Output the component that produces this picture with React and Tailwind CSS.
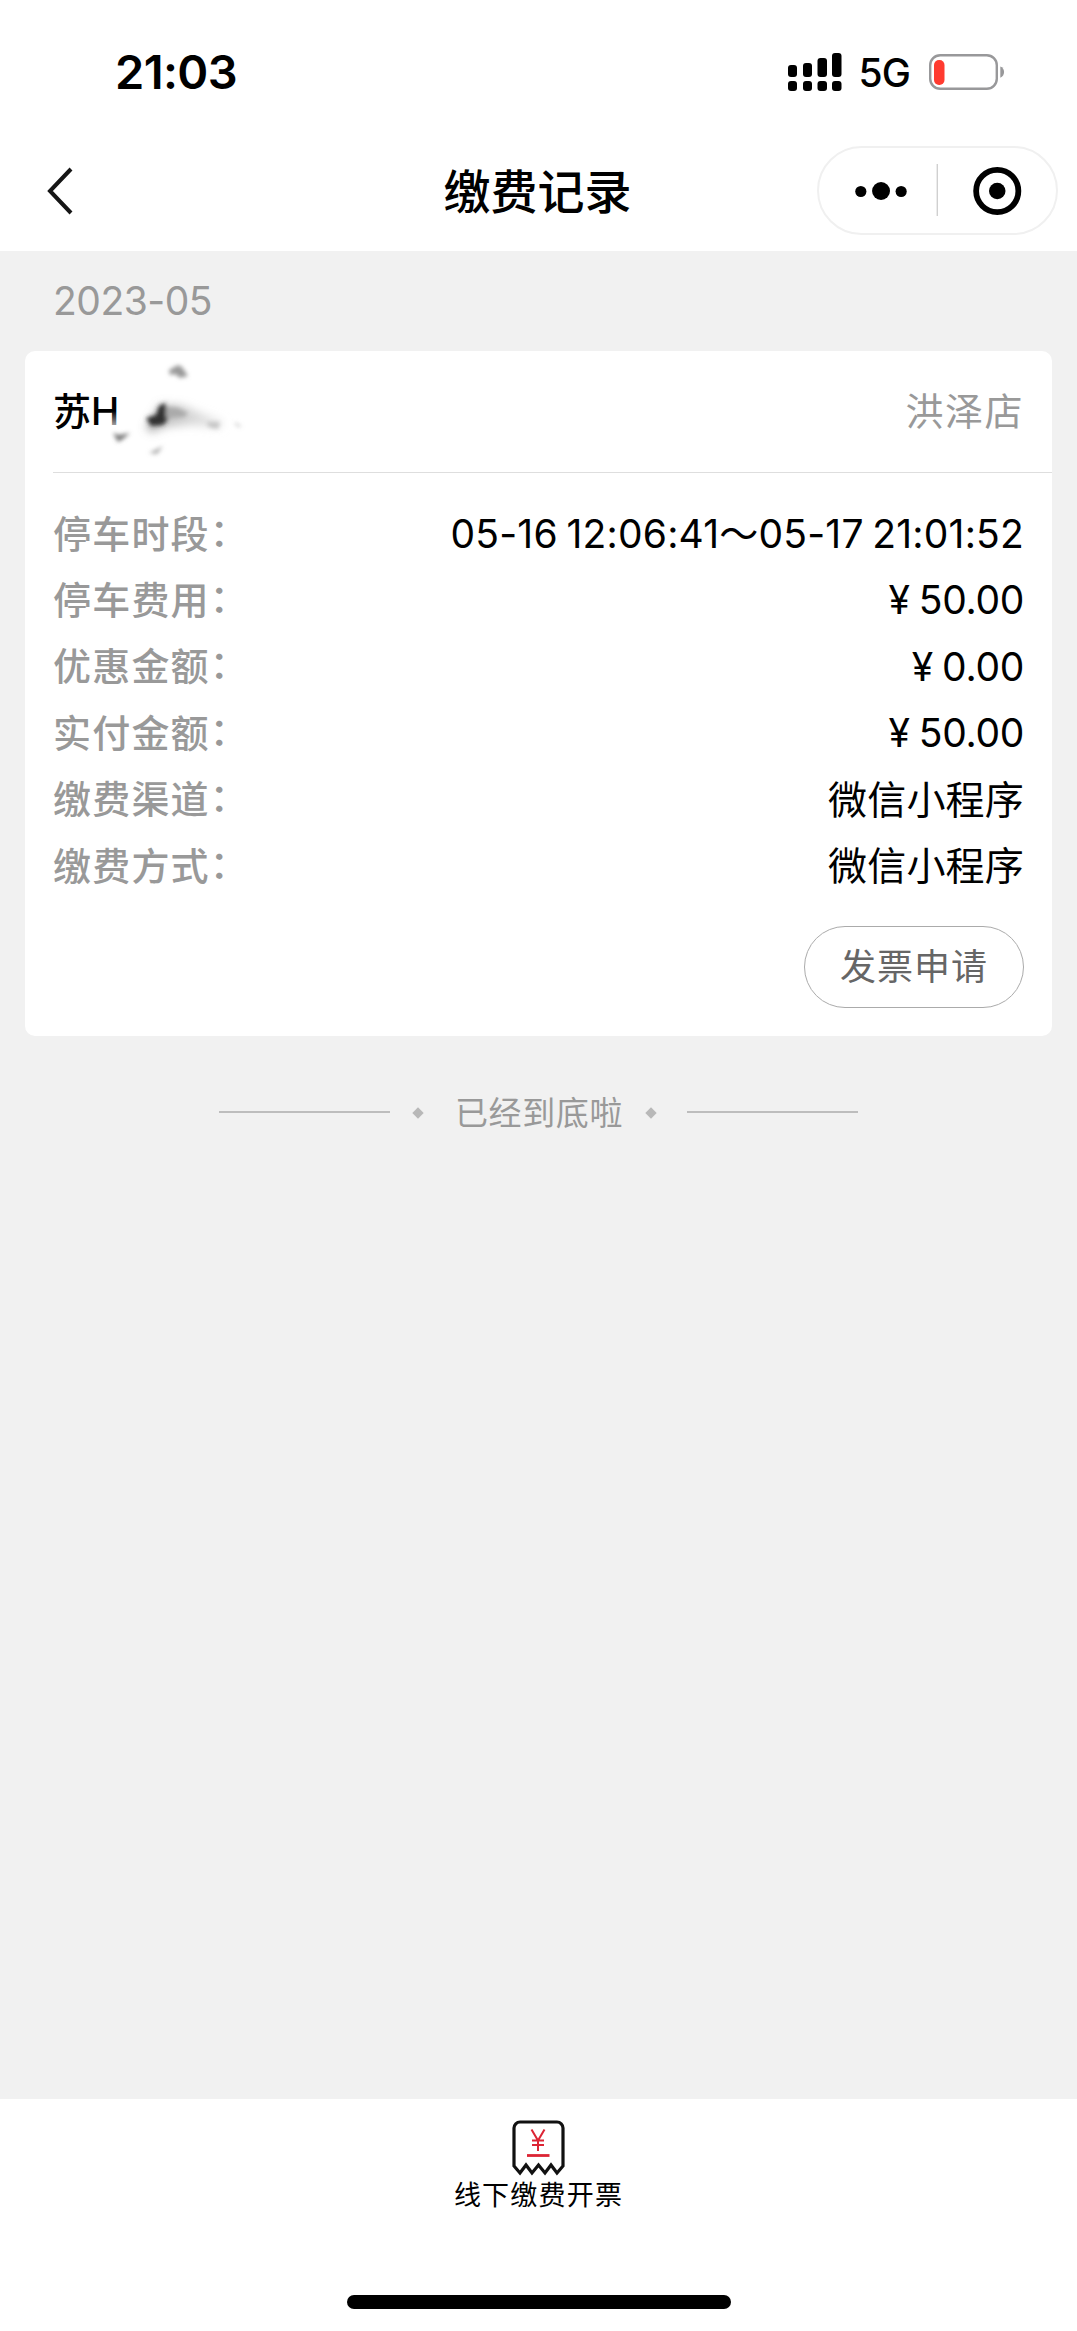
const rows = [
  { label: "停车时段", value: "05-16 12:06:41～05-17 21:01:52" },
  { label: "停车费用", value: "¥ 50.00", amount: true },
  { label: "优惠金额", value: "¥ 0.00", amount: true },
  { label: "实付金额", value: "¥ 50.00", amount: true },
  { label: "缴费渠道", value: "微信小程序" },
  { label: "缴费方式", value: "微信小程序" },
];

function SignalIcon() {
  return (
    <svg width="54" height="40" viewBox="0 0 54 40">
      <rect x="0" y="13" width="9" height="12" rx="3" />
      <rect x="15" y="11" width="9" height="14" rx="3" />
      <rect x="29.5" y="6" width="9.5" height="19" rx="3" />
      <rect x="44" y="1" width="9.5" height="24" rx="3" />
      <rect x="0" y="29" width="9" height="10" rx="3" />
      <rect x="15" y="29" width="9" height="10" rx="3" />
      <rect x="29.5" y="29" width="9.5" height="10" rx="3" />
      <rect x="44" y="29" width="9.5" height="10" rx="3" />
    </svg>
  );
}

function BatteryIcon() {
  return (
    <svg width="76" height="36" viewBox="0 0 76 36">
      <rect x="1.2" y="1.2" width="66.6" height="33.6" rx="10" fill="none" stroke="#98989a" strokeWidth="2.4" />
      <rect x="5" y="6" width="10.5" height="25" rx="5" fill="#ff3b30" />
      <path d="M71.3 12.5c5 1.6 5 9.6 0 11.2z" fill="#98989a" />
    </svg>
  );
}

function StatusBar() {
  return (
    <div className="flex h-[146px] items-start justify-between pl-[115px] pr-[72px] pt-[51px]">
      <span className="pt-px text-[47px] leading-[40px] font-semibold tracking-[-0.6px]">21:03</span>
      <div className="flex items-center">
        <SignalIcon />
        <span className="ml-[17px] mr-[19px] pt-[2px] text-[39px] leading-[40px] font-medium tracking-[-0.9px]">5G</span>
        <BatteryIcon />
      </div>
    </div>
  );
}

function NavBar() {
  return (
    <div className="grid h-[105px] grid-cols-3 items-start pl-[47px] pr-[19px]">
      <svg width="28" height="48" viewBox="0 0 28 48" className="mt-[21px]" fill="none" stroke="#161616" strokeWidth="4">
        <path d="M24 2L3 24l21 22" />
      </svg>
      <h1 className="-ml-[30px] pt-px text-center text-[47px] leading-[89px] font-medium">缴费记录</h1>
      <div className="flex h-[89px] w-[241px] items-center justify-self-end rounded-full border-2 border-[#f0f0f0]">
        <svg width="238" height="86" viewBox="0 0 238 86">
          <circle cx="42" cy="43.5" r="5.6" />
          <circle cx="62.3" cy="43" r="9" />
          <circle cx="82.5" cy="43.5" r="5.6" />
          <path d="M118.8 16v52" stroke="#d0d0d0" strokeWidth="1.4" />
          <circle cx="179" cy="43" r="21.2" fill="none" stroke="#000" strokeWidth="5.8" />
          <circle cx="179" cy="43" r="8.3" />
        </svg>
      </div>
    </div>
  );
}

// Licence plate digits are brushed over
function PlateSmudge() {
  return (
    <svg width="140" height="100" viewBox="0 0 140 100" className="absolute left-[57px] top-[-22px]">
      <defs>
        <filter id="soft" x="-50%" y="-50%" width="200%" height="200%">
          <feGaussianBlur stdDeviation="2.2" />
        </filter>
        <filter id="softer" x="-50%" y="-50%" width="200%" height="200%">
          <feGaussianBlur stdDeviation="4" />
        </filter>
        <linearGradient id="fade" x1="0" y1="0" x2="0" y2="1">
          <stop offset="0" stopColor="#fff" stopOpacity="0" />
          <stop offset="1" stopColor="#fff" stopOpacity="0.75" />
        </linearGradient>
        <linearGradient id="trail" x1="0" y1="0" x2="1" y2="0">
          <stop offset="0" stopColor="#777" />
          <stop offset="1" stopColor="#e4e4e4" />
        </linearGradient>
      </defs>
      <rect x="1" y="50" width="7" height="17" fill="url(#fade)" />
      <g filter="url(#softer)">
        <path d="M50 43l22 1 20 8 22 8-3 8-28-4-26 2-16 6-6-6z" fill="url(#trail)" opacity="0.55" />
      </g>
      <g filter="url(#soft)">
        <path d="M59 9l9-5 4 2 6 9-8 2-5-4-5 1z" fill="#999" />
        <path d="M36 57l10-3 3-9 6-3 4 15-6 7-12 1z" fill="#333" />
        <path d="M56 46l12 1 10 5-4 4-18 1z" fill="#aaa" />
        <path d="M96 61l14 0-2 7-9-2z" fill="#c4c4c4" />
        <path d="M3 72l6 2 11-2-7 6-5 3z" fill="#777" />
        <path d="M39 92l14-7-6 8z" fill="#aaa" />
        <path d="M124 61l8 5-5-1z" fill="#aaa" />
      </g>
    </svg>
  );
}

function RecordCard() {
  return (
    <section className="ml-[25px] mr-[25px] h-[685px] rounded-[10px] bg-white pl-[28px]">
      <div className="flex h-[122px] items-center justify-between border-b border-[#dedede] pr-[28px]">
        <div className="relative text-[38px] font-medium">
          苏H
          <PlateSmudge />
        </div>
        <span className="text-[38px] tracking-[1.5px] text-[#999]">洪泽店</span>
      </div>
      <dl className="pr-[28px] pt-[28px]">
        {rows.map((row) => (
          <div key={row.label} className="flex h-[66.4px] items-center justify-between">
            <dt className="flex text-[38px] font-medium tracking-[1.2px] text-[#999]">
              {row.label}
              <span className="-translate-y-[5px] font-['Noto_Sans_CJK_SC',sans-serif]">：</span>
            </dt>
            <dd
              className={
                row.amount
                  ? "text-[39px] tracking-[-0.3px] [word-spacing:-1.5px]"
                  : "text-[39px] tracking-[0.2px] [word-spacing:-2.5px]"
              }
            >
              {row.value}
            </dd>
          </div>
        ))}
      </dl>
      <div className="mt-[27px] flex justify-end pr-[28px]">
        <button className="h-[82px] w-[220px] rounded-full border border-[#ababab] text-[36px] tracking-[1px] text-[#666]">
          发票申请
        </button>
      </div>
    </section>
  );
}

function ListEnd() {
  return (
    <div className="mt-[53px] flex items-center justify-center text-[#999]">
      <i className="mb-[3px] h-[2px] w-[171px] bg-[#bdbdbd]" />
      <i className="ml-[24px] size-[8px] rotate-45 bg-[#b8b8b8]" />
      <span className="ml-[33px] mr-[24px] text-[33px] leading-[48px] tracking-[0.6px]">已经到底啦</span>
      <i className="mr-[32px] size-[8px] rotate-45 bg-[#b8b8b8]" />
      <i className="mb-[3px] h-[2px] w-[171px] bg-[#bdbdbd]" />
    </div>
  );
}

function InvoiceIcon() {
  return (
    <svg width="54" height="56" viewBox="0 0 54 56" fill="none">
      <path
        d="M2 46V8a6 6 0 0 1 6-6h37a6 6 0 0 1 6 6v38l-6 7-6-8-6 8-6.5-8-6.5 8-6-8-6 8z"
        stroke="#111"
        strokeWidth="3.2"
      />
      <path d="M19.5 9.5l6.5 11 6.5-11M26 20v11M20 20.5h12M20 25h12" stroke="#dc2434" strokeWidth="2" />
      <path d="M15 35.5h22.5" stroke="#dc2434" strokeWidth="2.8" />
    </svg>
  );
}

export default function App() {
  return (
    <div className="flex h-[2331px] w-[1077px] flex-col bg-[#f1f1f1] font-['Inter','Noto_Sans_CJK_SC',sans-serif] text-black">
      <header className="bg-white">
        <StatusBar />
        <NavBar />
      </header>
      <main className="flex-1">
        <p className="pl-[53px] text-[39px] leading-[100px] tracking-[-0.5px] text-[#999]">2023-05</p>
        <RecordCard />
        <ListEnd />
      </main>
      <footer className="flex h-[232px] flex-col items-center bg-white pt-[21px]">
        <InvoiceIcon />
        <span className="pt-[2px] text-[27px] leading-[36px] tracking-[1.2px]">线下缴费开票</span>
        <div className="mb-[22px] mt-auto h-[14px] w-[384px] rounded-full bg-black" />
      </footer>
    </div>
  );
}
